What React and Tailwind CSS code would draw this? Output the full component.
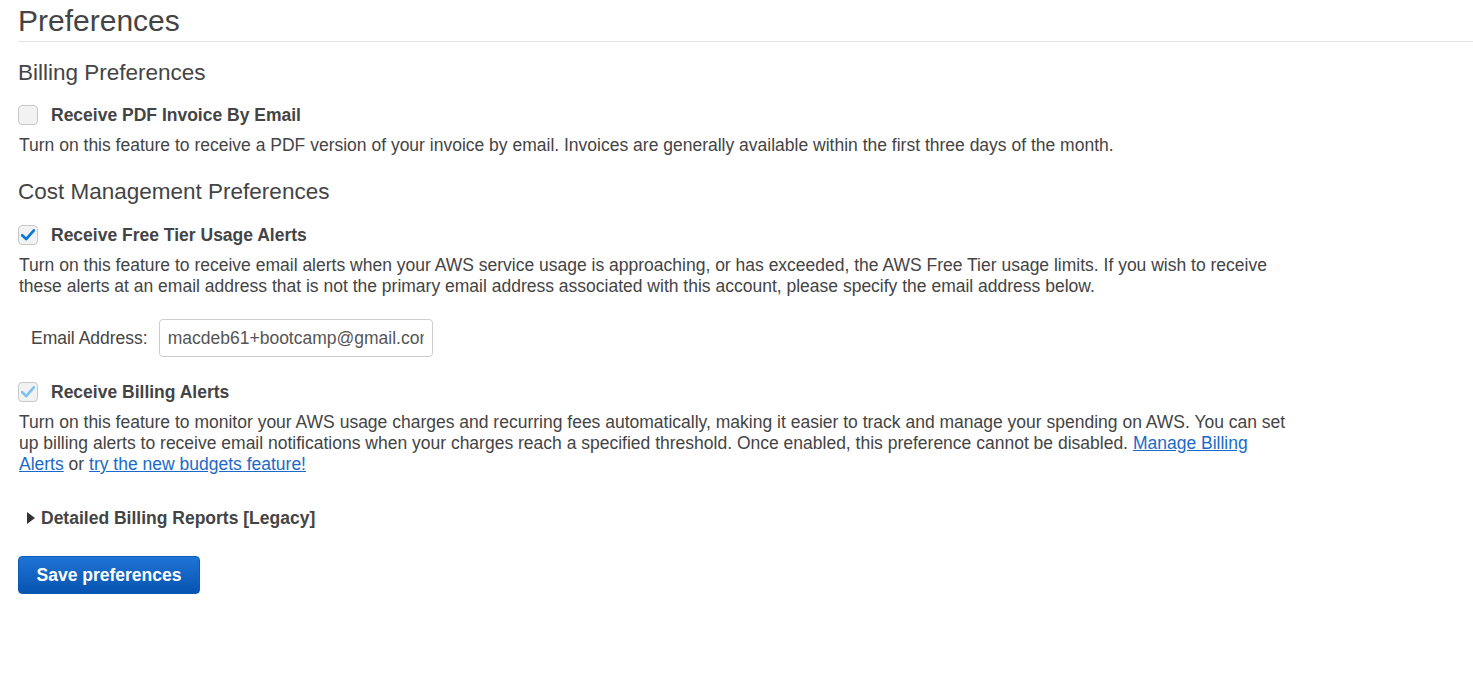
import React from "react";

const Checkbox = ({ checked, disabled }) => (
  <span className="flex h-[20px] w-[20px] shrink-0 items-center justify-center rounded-[4px] border border-[#c8c8c8] bg-[#f2f2f2]">
    {checked && (
      <svg viewBox="0 0 20 20" className="h-[20px] w-[20px]">
        <path
          d="M3.5 10.2 L8 14.5 L16.5 4.8"
          fill="none"
          stroke={disabled ? "#7dc3ee" : "#0a78d6"}
          strokeWidth="3"
          strokeLinecap="round"
          strokeLinejoin="round"
        />
      </svg>
    )}
  </span>
);

const Option = ({ label, checked, disabled, className }) => (
  <label className={"flex h-[24px] items-center gap-[13px] " + className}>
    <Checkbox checked={checked} disabled={disabled} />
    <span className="text-[17.5px] font-bold text-[#444]">{label}</span>
  </label>
);

export default function App() {
  return (
    <div className="min-h-screen bg-white pl-[18px] font-['Liberation_Sans',Arial,sans-serif] text-[17.5px] leading-[21px] text-[#444]">
      <h1 className="border-b border-[#e4e4e4] text-[30px] leading-[41px] text-[#444]">
        Preferences
      </h1>

      <h2 className="mt-[16px] text-[22.5px] leading-[30px]">Billing Preferences</h2>
      <Option className="mt-[15px]" label="Receive PDF Invoice By Email" />
      <p className="mt-[8px] max-w-[1272px] pl-px">
        Turn on this feature to receive a PDF version of your invoice by email. Invoices are generally
        available within the first three days of the month.
      </p>

      <h2 className="mt-[21px] text-[22.5px] leading-[30px]">Cost Management Preferences</h2>
      <Option className="mt-[16px]" label="Receive Free Tier Usage Alerts" checked />
      <p className="mt-[8px] max-w-[1272px] pl-px">
        Turn on this feature to receive email alerts when your AWS service usage is approaching, or has
        exceeded, the AWS Free Tier usage limits. If you wish to receive these alerts at an email address
        that is not the primary email address associated with this account, please specify the email
        address below.
      </p>

      <div className="mt-[22px] flex items-center gap-[11px] pl-[13px]">
        <span>Email Address:</span>
        <input
          type="text"
          readOnly
          value="macdeb61+bootcamp@gmail.com"
          className="h-[38px] w-[274px] rounded-[4px] border border-[#ccc] bg-white px-[8px] text-[17.5px] text-[#555] outline-none"
        />
      </div>

      <Option className="mt-[23px]" label="Receive Billing Alerts" checked disabled />
      <p className="mt-[8px] max-w-[1272px] pl-px">
        Turn on this feature to monitor your AWS usage charges and recurring fees automatically, making it
        easier to track and manage your spending on AWS. You can set up billing alerts to receive email
        notifications when your charges reach a specified threshold. Once enabled, this preference cannot
        be disabled.{" "}
        <a href="#" className="text-[#1b6ac9] underline">
          Manage Billing Alerts
        </a>{" "}
        or{" "}
        <a href="#" className="text-[#1b6ac9] underline">
          try the new budgets feature!
        </a>
      </p>

      <div className="mt-[31px] flex h-[24px] items-center gap-[6px] pl-[9px]">
        <svg viewBox="0 0 8 12" className="h-[12px] w-[8px]">
          <polygon points="0,0 8,6 0,12" fill="#333" />
        </svg>
        <span className="text-[17.5px] font-bold text-[#444]">Detailed Billing Reports [Legacy]</span>
      </div>

      <button className="mt-[26px] h-[38px] w-[182px] rounded-[4px] border border-[#0a5bb5] bg-gradient-to-b from-[#1f74d6] to-[#0654b0] text-[17.5px] font-bold text-white">
        Save preferences
      </button>
    </div>
  );
}
